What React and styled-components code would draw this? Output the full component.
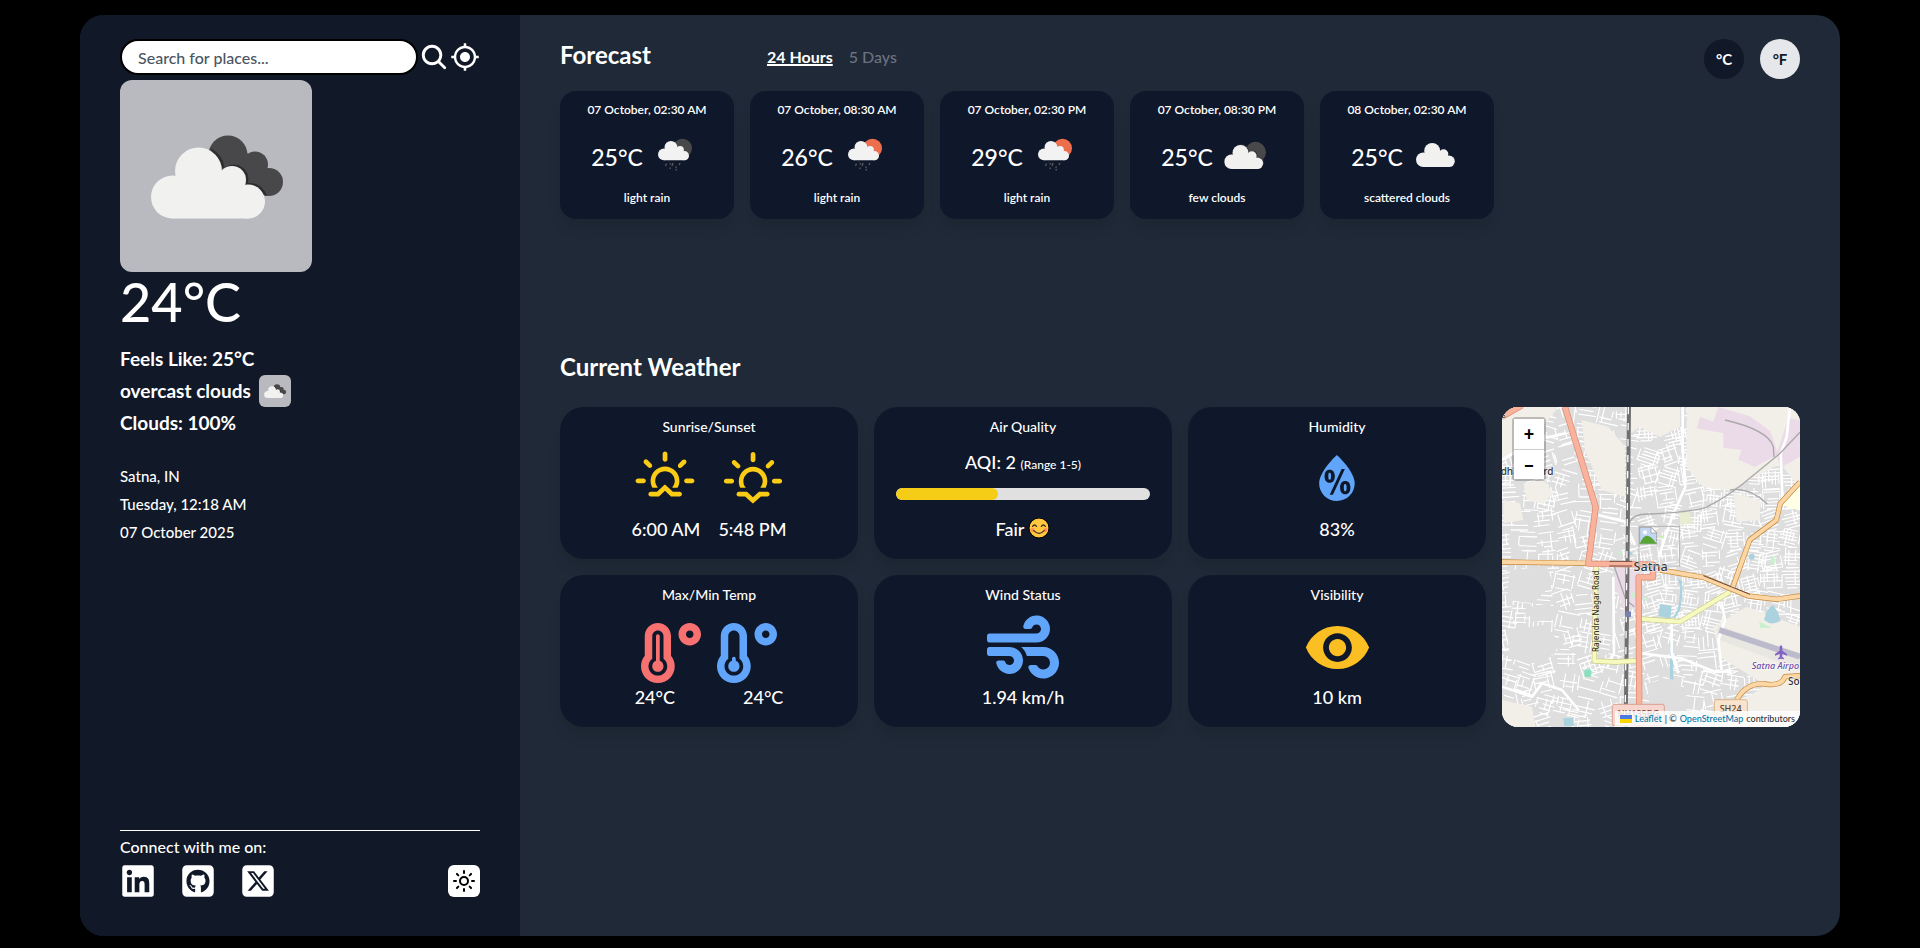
import React from "react";
import styled, { createGlobalStyle, css } from "styled-components";
import { IoSearch } from "react-icons/io5";
import { MdMyLocation, MdVisibility } from "react-icons/md";
import { FaLinkedin, FaTemperatureHigh, FaTemperatureLow, FaWind } from "react-icons/fa";
import { FaSquareGithub, FaSquareXTwitter } from "react-icons/fa6";
import { WiSunrise, WiSunset, WiHumidity } from "react-icons/wi";
import { LuSun } from "react-icons/lu";

const GlobalStyle = createGlobalStyle`
  *, *::before, *::after { box-sizing: border-box; }
  body {
    margin: 0;
    background: #000;
    color: #fff;
    font-family: Lato, "Noto Sans", sans-serif;
    font-size: 16px;
    font-weight: 500;
    line-height: 24px;
  }
  h1, h2, h3, p { margin: 0; font: inherit; }
  button, input { font: inherit; color: inherit; }
  button { padding: 0; border: 0; background: none; cursor: pointer; }
  svg { display: block; flex: none; }
`;

const Page = styled.div`
  min-height: 100vh;
  display: flex;
  justify-content: center;
  padding: 15px 0 12px;
`;

const Shell = styled.div`
  width: calc(100% * 11 / 12);
  display: flex;
  border-radius: 24px;
  overflow: hidden;
  background: #1f2937;
`;

/* ---------- sidebar ---------- */

const Sidebar = styled.aside`
  width: 25%;
  display: flex;
  flex-direction: column;
  padding: 24px 40px 37px;
  background: #111827;
`;

const SearchForm = styled.form`
  display: flex;
  align-items: center;
  gap: 1px;
  margin-bottom: 5px;
`;

const SearchInput = styled.input`
  flex: 1;
  min-width: 0;
  height: 36px;
  padding: 0 16px;
  border: 2px solid #000;
  border-radius: 18px;
  background: #fff;
  color: #4b5563;
  &::placeholder { color: #4b5563; opacity: 1; }
`;

const WeatherTile = styled.span`
  display: block;
  width: ${(p) => p.$size}px;
  height: ${(p) => p.$size}px;
  border-radius: ${(p) => (p.$size > 100 ? 12 : 6)}px;
  background: #b9bac0;
`;

const Temperature = styled.p`
  margin-bottom: 11px;
  font-size: 54px;
  line-height: 60px;
  font-weight: 500;
`;

const Conditions = styled.div`
  font-size: 19px;
  font-weight: 700;
  line-height: 32px;
`;

const ConditionRow = styled.p`
  display: flex;
  align-items: center;
  gap: 8px;
`;

const Place = styled.div`
  margin-top: 23px;
  font-size: 15px;
  line-height: 28px;
`;

const SidebarFooter = styled.footer`
  margin-top: auto;
  padding-top: 4px;
  border-top: 1px solid #fff;
`;

const FooterRow = styled.div`
  display: flex;
  align-items: center;
  justify-content: space-between;
  margin-top: 4px;
`;

const Socials = styled.nav`
  display: flex;
  gap: 24px;
  a { color: #fff; }
`;

const ThemeButton = styled.button`
  width: 32px;
  height: 32px;
  display: grid;
  place-items: center;
  border-radius: 6px;
  background: #fff;
  color: #000;
`;

/* ---------- main ---------- */

const Main = styled.main`
  flex: 1;
  min-width: 0;
  padding: 24px 40px;
`;

const Heading = styled.h2`
  font-size: 24px;
  line-height: 32px;
  font-weight: 700;
`;

const ForecastSection = styled.section`
  min-height: 312px;
`;

const ForecastHeader = styled.header`
  display: grid;
  grid-template-columns: 191px 1fr auto;
  align-items: start;
  gap: 16px;
  height: 40px;
  margin-bottom: 12px;
`;

const ButtonGroup = styled.div`
  display: flex;
  gap: 16px;
`;

const Tab = styled.button`
  color: #6b7280;
  line-height: 36px;
  ${(p) =>
    p.$active &&
    css`
      color: #fff;
      font-weight: 700;
      text-decoration: underline;
      text-decoration-thickness: 2px;
    `}
`;

const UnitButton = styled.button`
  width: 40px;
  height: 40px;
  border-radius: 50%;
  font-size: 15px;
  font-weight: 700;
  background: ${(p) => (p.$active ? "#111827" : "#e5e7eb")};
  color: ${(p) => (p.$active ? "#fff" : "#111827")};
`;

const ForecastList = styled.div`
  display: flex;
  flex-wrap: wrap;
  gap: 16px;
`;

const ForecastCard = styled.article`
  flex: 0 0 174px;
  height: 128px;
  display: flex;
  flex-direction: column;
  align-items: center;
  justify-content: space-between;
  padding: 11px 8px 13px;
  border-radius: 16px;
  background: #0f172a;
  box-shadow: 0 10px 15px -3px rgba(0, 0, 0, 0.1);
  font-size: 12px;
  font-weight: 600;
  line-height: 16px;
`;

const ForecastReading = styled.div`
  display: flex;
  align-items: center;
  gap: 4px;
  height: 62px;
  padding-top: 6px;
  font-size: 23px;
  font-weight: 500;
`;

const WeatherHeading = styled(Heading)`
  margin-bottom: 24px;
`;

const WeatherGrid = styled.div`
  display: grid;
  grid-template-columns: repeat(4, 1fr);
  grid-auto-rows: 152px;
  gap: 16px;
`;

const Card = styled.article`
  display: flex;
  flex-direction: column;
  align-items: center;
  padding: 8px 22px 18px;
  border-radius: 24px;
  background: #0f172a;
  box-shadow: 0 10px 15px -3px rgba(0, 0, 0, 0.1);
  font-size: 18px;
`;

const CardTitle = styled.h3`
  font-size: 14px;
`;

const CardBody = styled.div`
  flex: 1;
  width: 100%;
  display: flex;
  align-items: center;
  justify-content: center;
  gap: ${(p) => p.$gap || 0}px;
  padding-top: ${(p) => p.$drop || 0}px;
  color: ${(p) => p.$color || "inherit"};
`;

const Values = styled.div`
  display: flex;
  align-items: center;
  gap: ${(p) => p.$gap || 0}px;
`;

const Quality = styled.div`
  width: 100%;
  height: 78px;
  display: flex;
  flex-direction: column;
  align-items: center;
  gap: 12px;
  padding-top: 12px;
`;

const Range = styled.small`
  font-size: 12px;
`;

const Track = styled.div`
  width: 100%;
  height: 12px;
  border-radius: 6px;
  background: #e0e0e0;
  overflow: hidden;
`;

const AqiText = styled.p`
  line-height: 22px;
`;

const Fill = styled.div`
  height: 100%;
  border-radius: 6px;
  background: #f6cd16;
`;

/* ---------- map ---------- */

const MapCard = styled.section`
  position: relative;
  grid-column: 4;
  grid-row: 1 / span 2;
  border-radius: 16px;
  overflow: hidden;
  background: #dfdfdf;
  > svg { width: 100%; height: 100%; }
`;

const ZoomControl = styled.div`
  position: absolute;
  top: 10px;
  left: 10px;
  width: 34px;
  border: 2px solid rgba(0, 0, 0, 0.22);
  border-radius: 4px;
  background-clip: padding-box;
`;

const ZoomButton = styled.button`
  display: block;
  width: 30px;
  height: 30px;
  background: #fff;
  color: #000;
  font-size: 18px;
  font-weight: 900;
  line-height: 28px;
  & + & { border-top: 1px solid #ccc; }
`;

const Attribution = styled.p`
  position: absolute;
  right: 0;
  bottom: 0;
  display: flex;
  align-items: center;
  gap: 3px;
  padding: 0 5px;
  background: rgba(255, 255, 255, 0.8);
  color: #333;
  font-size: 9px;
  line-height: 16px;
  white-space: nowrap;
  a { color: #0078a8; text-decoration: none; }
`;

/* ---------- drawings ---------- */

const CloudShape = (props) => (
  <g {...props}>
    <circle cx="78.5" cy="91" r="23.5" />
    <circle cx="52.5" cy="117" r="21.5" />
    <circle cx="112" cy="100" r="14" />
    <circle cx="128" cy="121.5" r="17" />
    <path d="M52.5 97h60l16 12v29.5h-76z" />
  </g>
);

const OvercastIcon = ({ size }) => (
  <svg width={size} height={size} viewBox="0 0 192 192" aria-hidden="true">
    <g fill="#48484a">
      <circle cx="108" cy="75" r="19.5" />
      <circle cx="135" cy="84.5" r="13" />
      <circle cx="149" cy="102" r="14" />
      <path d="M90 70l37 3 14 12 12 20-6 11-40-10z" />
    </g>
    <CloudShape fill="#2d2d2f" stroke="#2d2d2f" strokeWidth="1" transform="translate(2 -1)" clipPath="url(#overcast-edge)" />
    <clipPath id="overcast-edge">
      <path d="M87 67h38l18 30 4 20-34-8z" />
    </clipPath>
    <CloudShape fill="#f1f1f0" />
  </svg>
);

const ForecastIcon = ({ kind }) => {
  if (kind === "scattered") {
    return (
      <svg width="56" height="56" viewBox="0 0 56 56" aria-hidden="true">
        <CloudShape fill="#f1f1f0" transform="translate(-1.5 -9) scale(.34)" />
      </svg>
    );
  }
  if (kind === "few") {
    return (
      <svg width="56" height="56" viewBox="0 0 56 56" aria-hidden="true">
        <circle cx="38.5" cy="23.3" r="10.5" fill="#48484a" />
        <CloudShape fill="#303033" transform="translate(-2.4 -7.6) scale(.34)" />
        <CloudShape fill="#f1f1f0" transform="translate(-3.2 -7) scale(.34)" />
      </svg>
    );
  }
  return (
    <svg width="56" height="56" viewBox="0 0 56 56" aria-hidden="true">
      <circle cx="35.5" cy="19.3" r="9.5" fill={kind === "rain-day" ? "#ec6e4c" : "#48484a"} />
      <CloudShape fill="#f2f2f2" transform="translate(2.6 -6.4) scale(.272)" />
      <path
        d="M19.5 34.5l-1 2.5M26 34l-1 3M33 34l-1 2M23.5 38.5l-.6 1.5M29.5 37.5l-.8 1.5M29.5 40l-.6 1.6M23.5 34l-.5 1.4"
        stroke="#58585b"
        strokeWidth="1.4"
        fill="none"
      />
      <circle cx="21.8" cy="31.7" r=".8" fill="#48484a" />
    </svg>
  );
};

const SmileIcon = () => (
  <svg width="22" height="22" viewBox="0 0 22 22" role="img" aria-label="smiling face">
    <circle cx="11" cy="10" r="10" fill="#ffc83d" stroke="#000" strokeWidth="1" />
    <circle cx="4.6" cy="12" r="2.1" fill="#ff8257" opacity=".85" />
    <circle cx="17.4" cy="12" r="2.1" fill="#ff8257" opacity=".85" />
    <path
      d="M4.6 8.4q1.9-2.8 4 0M13.4 8.4q1.9-2.8 4 0M5.8 12.6q5.2 5.4 10.4 0"
      fill="none"
      stroke="#402a32"
      strokeWidth="1.3"
      strokeLinecap="round"
    />
  </svg>
);

/* Small repeatable generator so that the side streets are the same on each load. */
const makeRandom = (seed) => () => {
  seed = (seed * 16807) % 2147483647;
  return seed / 2147483647;
};

const buildStreets = () => {
  const rnd = makeRandom(4711);
  let d = "";
  for (let y = 60; y < 1040; y += 62) {
    for (let x = 60; x < 1000; x += 62) {
      const angle = (rnd() - 0.5) * 0.7;
      const c = Math.cos(angle);
      const s = Math.sin(angle);
      const cx = x + rnd() * 26;
      const cy = y + rnd() * 26;
      const line = (a, b, e, f) => {
        const p = (u, v) => `${Math.round(cx + u * c - v * s)} ${Math.round(cy + u * s + v * c)}`;
        d += `M${p(a, b)}L${p(e, f)}`;
      };
      const dense = x > 440 && y < 720 ? 10 : 14;
      for (let k = -30; k <= 30; k += dense) {
        if (rnd() > 0.25) line(-34 + rnd() * 24, k, 12 + rnd() * 24, k);
        if (rnd() > 0.5) line(k, -32 + rnd() * 24, k, 6 + rnd() * 26);
      }
    }
  }
  return d;
};

const STREETS = buildStreets();

const MapDrawing = () => (
  <svg viewBox="66 51 894 960" preserveAspectRatio="xMidYMid slice" role="img" aria-label="Map of Satna">
    <rect x="0" y="0" width="1100" height="1100" fill="#dedede" />
    <path d={STREETS} stroke="#c9c9c9" strokeWidth="5" fill="none" opacity=".5" />
    <path d={STREETS} stroke="#fff" strokeWidth="4" fill="none" />
    <g fill="#f2efe9">
      <path d="M66 51h170l-50 60-40 60-80 40z" />
      <path d="M305 90l80 20 50 60v150l-70-20-50-120z" />
      <path d="M450 51h150v60l-60 30-60-30-30 20z" />
      <path d="M620 51h340v240l-60-70-150 80-80-10-50-60z" />
      <path d="M130 280l60-10 30 40-30 30-50-10z" />
      <path d="M70 330l50 10 10 50-60 10z" />
      <path d="M800 650l160 60v210l-80-20-160-100-20-90z" />
      <path d="M66 930l90 20 10 61h-100zM760 950l90-60 110-20v141H740z" />
      <path d="M760 310l80 20v60l-70 5z" />
    </g>
    <g fill="#dedede">
      <path d="M90 540l110-10 20 50-60 60-80-10zM150 650l60-10 10 50-70 5zM80 720l120-15 40 60-50 60-100-20z" />
      <path d="M500 880l90-20 30 60-50 50-60-20zM350 550h50v180h-50z" />
    </g>
    <g fill="#ebdbe8">
      <path d="M660 80l40 15 15-44 95 28 60 44 25 70-70 38-50-22 10-30-55-5V130l-80-15zM925 85l35 5v110l-60 35-10-45z" />
      <path d="M404 530l70 10v110l-40 15-25-70z" />
    </g>
    <path d="M904 345l56-68v85z" fill="#ffffe5" />
    <path d="M597 370l30-8 10 38-35 5z" fill="#e8ecd0" />
    <path d="M712 705l248 85v50l-248-92z" fill="#e9e7e2" />
    <g fill="#aad3df">
      <path d="M540 642l35 6-4 38-36-8zM852 690q10-40 28-44 16 20 22 46-26 18-50-2zM592 565l16 10-6 18zM570 760h8l2 110-10-4zM250 985l30-2 2 25h-30z" />
      <circle cx="815" cy="500" r="9" />
      <circle cx="453" cy="491" r="5" />
    </g>
    <g fill="#c8f0cc">
      <path d="M838 695l38 18h-36zM872 500h12v22h-12zM456 608h12v14h-12zM494 620h10v12h-10z" />
      <circle cx="420" cy="488" r="6" />
    </g>
    <rect x="313" y="838" width="21" height="23" rx="6" fill="#88e0be" />
    <path d="M535 442l18-8v14z" fill="#cdebb0" />
    <g stroke="#fff" fill="none" strokeWidth="8" strokeLinejoin="round">
      <path d="M608 51v130l8 110-40 90-40 120" />
      <path d="M930 51l-10 90-18 50 6 150" />
      <path d="M355 375l80 20 30 70" />
      <path d="M66 890l90 30 30-40 60 20 50 60" />
      <path d="M484 790l120 15 100 40h50" />
      <path d="M725 640l10 50-20 60 10 90" />
      <path d="M575 700v90l20 60M66 210l100-60 90-20" />
      <path d="M400 560l2 230-20 40" />
    </g>
    <path d="M604 590q0 40-8 70l-14 24" stroke="#aad3df" strokeWidth="7" fill="none" />
    <g stroke="#a9a9a9" strokeWidth="4" fill="none">
      <path d="M448 400q10-30 60-28 120-5 170-20 60-30 110-70l110-90 62-65" />
      <path d="M735 90q130 30 145 80l2 32M750 300q60-10 112 42" />
      <path d="M403 530l35 100 25 20" />
    </g>
    <path d="M718 720l242 80" stroke="#bbbbcc" strokeWidth="18" fill="none" />
    <g fill="none" strokeLinejoin="round">
      <path d="M447 51l-6 620-4 340" stroke="#707070" strokeWidth="12" />
      <path d="M445 51l-6 620-4 340" stroke="#fff" strokeWidth="4" strokeDasharray="22 26" />
      <path d="M348 528l-5 285 65 3 62-4M484 687l116 8 150-90" stroke="#c9c98a" strokeWidth="16" />
      <path d="M348 528l-5 285 65 3 62-4M484 687l116 8 150-90" stroke="#f7fabf" strokeWidth="12" />
      <path d="M66 516l258 4M540 540l130 22 135 56 85 10 70-10M757 595l52-145 80-60 12-50 59-64M765 940q30-64 90-58 50 8 60-22l45-3" stroke="#c48a3c" strokeWidth="16" />
      <path d="M66 516l258 4M540 540l130 22 135 56 85 10 70-10M757 595l52-145 80-60 12-50 59-64M765 940q30-64 90-58 50 8 60-22l45-3" stroke="#fcd6a4" strokeWidth="12" />
      <path d="M255 51l92 300-22 170 194 3v38h-43l2 449M66 80l60-34" stroke="#d98870" strokeWidth="19" />
      <path d="M255 51l92 300-22 170 194 3v38h-43l2 449M66 80l60-34" stroke="#f9b29c" strokeWidth="15" />
      <path d="M388 514h68M388 528h68M670 557l140 56" stroke="#704c40" strokeWidth="3" />
    </g>
    <rect x="436" y="664" width="17" height="17" fill="#7981b0" />
    <path d="M903 766q4 0 4 10v6l14 10v5l-14-5v9l5 4v3l-9-2-9 2v-3l5-4v-9l-14 5v-5l14-10v-6q0-10 4-10z" fill="#8461c4" />
    <rect x="397" y="943" width="156" height="64" rx="6" fill="#f5d5cd" stroke="#d9a193" strokeWidth="3" />
    <rect x="703" y="929" width="99" height="64" rx="6" fill="#f8e3cd" stroke="#d9b48d" strokeWidth="3" />
    <g fontFamily="'Noto Sans', sans-serif" fill="#333" stroke="#fff" strokeWidth="3" paintOrder="stroke">
      <text x="62" y="255" fontSize="30">dhari Ward</text>
      <text x="512" y="544" fontSize="38" textAnchor="middle">Satna</text>
      <text x="924" y="885" fontSize="30">So</text>
      <text x="66" y="84" fontSize="24">s</text>
      <text x="815" y="837" fontSize="27" fontStyle="italic" fill="#6b4ba8">Satna Airpo</text>
      <text transform="translate(356 786) rotate(-90)" fontSize="24" stroke="#f7fabf">Rajendra Nagar Road</text>
      <text x="475" y="982" fontSize="27" textAnchor="middle" fill="#7a3a30" stroke="none">NH135BG</text>
      <text x="752" y="966" fontSize="27" textAnchor="middle" fill="#5c4030" stroke="none">SH24</text>
    </g>
    <g>
      <rect x="477" y="409" width="122" height="119" fill="none" stroke="#b4b4b4" strokeWidth="3" />
      <path d="M479 412h34l17 16v34h-51z" fill="#c5d6f5" stroke="#909090" strokeWidth="2" />
      <path d="M513 412v17h17z" fill="#fff" stroke="#909090" strokeWidth="2" />
      <path d="M479 461q10-24 22-24t29 24z" fill="#58a536" />
      <circle cx="495" cy="427" r="6" fill="#fff" />
    </g>
  </svg>
);

/* ---------- page ---------- */

const FORECAST = [
  { time: "07 October, 02:30 AM", temp: "25°C", text: "light rain", icon: "rain-night" },
  { time: "07 October, 08:30 AM", temp: "26°C", text: "light rain", icon: "rain-day" },
  { time: "07 October, 02:30 PM", temp: "29°C", text: "light rain", icon: "rain-day" },
  { time: "07 October, 08:30 PM", temp: "25°C", text: "few clouds", icon: "few" },
  { time: "08 October, 02:30 AM", temp: "25°C", text: "scattered clouds", icon: "scattered" },
];

const AQI = 2;

export default function App() {
  return (
    <>
      <GlobalStyle />
      <Page>
        <Shell>
          <Sidebar>
            <SearchForm onSubmit={(e) => e.preventDefault()}>
              <SearchInput type="text" placeholder="Search for places..." aria-label="Search for places" />
              <button type="submit" aria-label="Search">
                <IoSearch size={30} />
              </button>
              <button type="button" aria-label="Use my location">
                <MdMyLocation size={30} />
              </button>
            </SearchForm>
            <WeatherTile $size={192}>
              <OvercastIcon size={192} />
            </WeatherTile>
            <Temperature>24°C</Temperature>
            <Conditions>
              <p>Feels Like: 25°C</p>
              <ConditionRow>
                overcast clouds
                <WeatherTile $size={32}>
                  <OvercastIcon size={32} />
                </WeatherTile>
              </ConditionRow>
              <p>Clouds: 100%</p>
            </Conditions>
            <Place>
              <p>Satna, IN</p>
              <p>Tuesday, 12:18 AM</p>
              <p>07 October 2025</p>
            </Place>
            <SidebarFooter>
              <p>Connect with me on:</p>
              <FooterRow>
                <Socials aria-label="Social links">
                  <a href="#linkedin" aria-label="LinkedIn"><FaLinkedin size={36} /></a>
                  <a href="#github" aria-label="GitHub"><FaSquareGithub size={36} /></a>
                  <a href="#x" aria-label="X"><FaSquareXTwitter size={36} /></a>
                </Socials>
                <ThemeButton type="button" aria-label="Light theme">
                  <LuSun size={24} />
                </ThemeButton>
              </FooterRow>
            </SidebarFooter>
          </Sidebar>

          <Main>
            <ForecastSection>
              <ForecastHeader>
                <Heading>Forecast</Heading>
                <ButtonGroup>
                  <Tab type="button" $active>24 Hours</Tab>
                  <Tab type="button">5 Days</Tab>
                </ButtonGroup>
                <ButtonGroup>
                  <UnitButton type="button" $active>°C</UnitButton>
                  <UnitButton type="button">°F</UnitButton>
                </ButtonGroup>
              </ForecastHeader>
              <ForecastList>
                {FORECAST.map((f) => (
                  <ForecastCard key={f.time}>
                    <p>{f.time}</p>
                    <ForecastReading>
                      {f.temp}
                      <ForecastIcon kind={f.icon} />
                    </ForecastReading>
                    <p>{f.text}</p>
                  </ForecastCard>
                ))}
              </ForecastList>
            </ForecastSection>

            <section>
              <WeatherHeading>Current Weather</WeatherHeading>
              <WeatherGrid>
                <Card>
                  <CardTitle>Sunrise/Sunset</CardTitle>
                  <CardBody $color="#facc15" $gap={16} $drop={4}>
                    <WiSunrise size={72} />
                    <WiSunset size={72} />
                  </CardBody>
                  <Values $gap={18}>
                    <span>6:00 AM</span>
                    <span>5:48 PM</span>
                  </Values>
                </Card>
                <Card>
                  <CardTitle>Air Quality</CardTitle>
                  <Quality>
                    <AqiText>AQI: {AQI} <Range>(Range 1-5)</Range></AqiText>
                    <Track role="meter" aria-label="Air quality index" aria-valuemin={0} aria-valuemax={5} aria-valuenow={AQI}>
                      <Fill style={{ width: `${(AQI / 5) * 100}%` }} />
                    </Track>
                  </Quality>
                  <Values $gap={4}>
                    Fair <SmileIcon />
                  </Values>
                </Card>
                <Card>
                  <CardTitle>Humidity</CardTitle>
                  <CardBody $color="#60a5fa">
                    <WiHumidity size={72} />
                  </CardBody>
                  <p>83%</p>
                </Card>
                <Card>
                  <CardTitle>Max/Min Temp</CardTitle>
                  <CardBody $gap={16} $drop={14}>
                    <FaTemperatureHigh size={60} color="#f87171" />
                    <FaTemperatureLow size={60} color="#60a5fa" />
                  </CardBody>
                  <Values $gap={68}>
                    <span>24°C</span>
                    <span>24°C</span>
                  </Values>
                </Card>
                <Card>
                  <CardTitle>Wind Status</CardTitle>
                  <CardBody $color="#60a5fa" $drop={2}>
                    <FaWind size={72} />
                  </CardBody>
                  <p>1.94 km/h</p>
                </Card>
                <Card>
                  <CardTitle>Visibility</CardTitle>
                  <CardBody $color="#fbbf24" $drop={2}>
                    <MdVisibility size={69} />
                  </CardBody>
                  <p>10 km</p>
                </Card>
                <MapCard aria-label="Map">
                  <MapDrawing />
                  <ZoomControl>
                    <ZoomButton type="button" aria-label="Zoom in">+</ZoomButton>
                    <ZoomButton type="button" aria-label="Zoom out">−</ZoomButton>
                  </ZoomControl>
                  <Attribution>
                    <svg width="12" height="8" viewBox="0 0 12 8" aria-hidden="true">
                      <path fill="#4c7be1" d="M0 0h12v4H0z" />
                      <path fill="#ffd500" d="M0 4h12v4H0z" />
                    </svg>
                    <a href="#leaflet">Leaflet</a> | © <a href="#osm">OpenStreetMap</a> contributors
                  </Attribution>
                </MapCard>
              </WeatherGrid>
            </section>
          </Main>
        </Shell>
      </Page>
    </>
  );
}
